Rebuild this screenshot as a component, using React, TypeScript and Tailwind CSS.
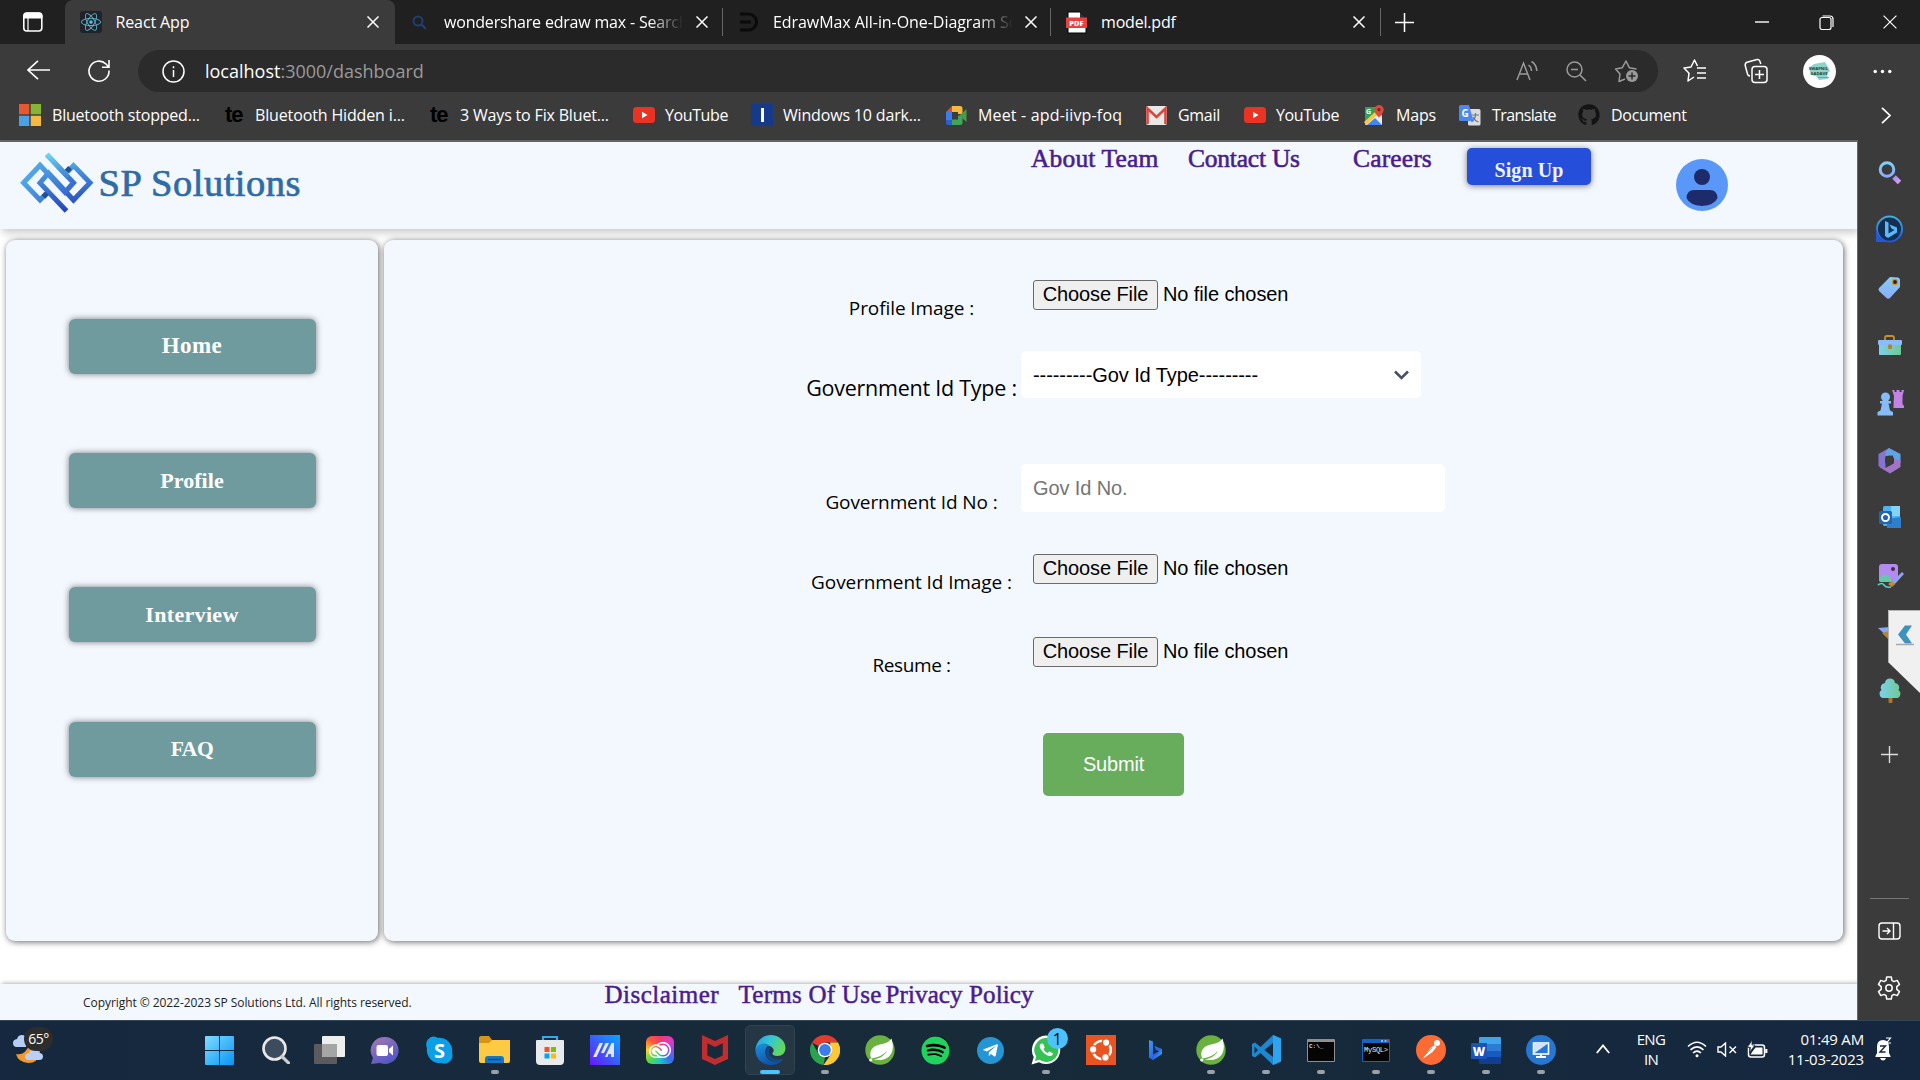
import type { ReactNode } from "react";
import { FaGithub, FaReact, FaSpotify, FaTelegramPlane } from "react-icons/fa";
import { SiMcafee, SiAdobecreativecloud, SiUbuntu } from "react-icons/si";

const X = ({ s = 12, w = 1.5 }: { s?: number; w?: number }) => (
  <svg width={s} height={s} viewBox="0 0 12 12" fill="none" stroke="#fff" strokeWidth={w}>
    <path d="M.5 .5l11 11M11.5 .5l-11 11" />
  </svg>
);

/* ---------- browser chrome ---------- */

function TabStrip() {
  return (
    <div className="flex h-11 shrink-0 bg-[#202020] text-base text-white">
      <div className="flex w-[65px] shrink-0 items-center pl-[22px]">
        <svg width="22" height="22" viewBox="0 0 22 22" fill="none" stroke="#fff">
          <rect x="1.8" y="2" width="18" height="18" rx="3" strokeWidth="1.6" />
          <path d="M2 4.500a2.500 2.500 0 0 1 2.500-2.500h13a2.500 2.500 0 0 1 2.500 2.500V7H2z" fill="#fff" />
          <path d="M6 7v13" strokeWidth="1.2" />
        </svg>
      </div>
      <div className="flex w-[330px] shrink-0 items-center rounded-t-lg bg-[#3b3b3b] pl-[15px] pr-[16px]">
        <div className="flex size-[22px] items-center justify-center rounded-[3px] bg-[#20232a]">
          <FaReact size={20} color="#61b8d4" />
        </div>
        <span className="ml-[13.5px] flex-1 tracking-[-0.12px]">React App</span>
        <X />
      </div>
      <div className="flex w-[327px] shrink-0 items-center pl-[17px] pr-[14px]">
        <svg width="15" height="15" viewBox="0 0 15 15" fill="none" stroke="#223f70" strokeWidth="2">
          <circle cx="6" cy="6" r="4.500" />
          <path d="M9.300 9.300l4.500 4.500" />
        </svg>
        <span className="ml-[17px] whitespace-nowrap tracking-[-0.19px] [mask-image:linear-gradient(90deg,#000_205px,transparent_239px)]">
          wondershare edraw max - Search
        </span>
        <span className="ml-auto"><X /></span>
      </div>
      <div className="my-2 w-px shrink-0 bg-[#666]" />
      <div className="flex w-[327px] shrink-0 items-center pl-[16px] pr-[13px]">
        <svg width="19" height="20" viewBox="0 0 19 20" fill="none" stroke="#0b0b0b" strokeWidth="3.200">
          <path d="M1 2h8.500a8 8 0 0 1 0 16H1M1 10h11" />
        </svg>
        <span className="ml-[15px] whitespace-nowrap tracking-[-0.06px] [mask-image:linear-gradient(90deg,#000_205px,transparent_240px)]">
          EdrawMax All-in-One-Diagram So
        </span>
        <span className="ml-auto"><X /></span>
      </div>
      <div className="my-2 w-px shrink-0 bg-[#666]" />
      <div className="flex w-[329px] shrink-0 items-center pl-[15px] pr-[15px]">
        <svg width="22" height="23" viewBox="0 0 22 23">
          <path d="M2 1h12l6 6v15H2z" fill="#fff" stroke="#000" />
          <path d="M14 1l6 6h-6z" fill="#333" />
          <rect x="0" y="6.500" width="21" height="10.500" fill="#e5433f" />
          <text x="10.500" y="14.600" textAnchor="middle" fontSize="7.500" fontWeight="800" fill="#fff" fontFamily="Open Sans">PDF</text>
        </svg>
        <span className="ml-[13px] flex-1 tracking-[-0.18px]">model.pdf</span>
        <X />
      </div>
      <div className="my-2 w-px shrink-0 bg-[#666]" />
      <div className="flex flex-1 items-center justify-between pl-[14px] pr-[23px]">
        <svg width="19" height="19" viewBox="0 0 19 19" stroke="#fff" strokeWidth="1.500"><path d="M0 9.500h19M9.500 0v19" /></svg>
        <div className="flex items-center gap-[49.5px]">
          <svg width="14" height="2" viewBox="0 0 14 2"><path d="M0 1h14" stroke="#fff" strokeWidth="1.400" /></svg>
          <svg width="15" height="15" viewBox="0 0 15 15" fill="none" stroke="#fff" strokeWidth="1.200">
            <rect x="1" y="2.500" width="11" height="12" rx="2" />
            <path d="M3.500 1h7.500a3 3 0 0 1 3 3v8" />
          </svg>
          <X s={14} w={1} />
        </div>
      </div>
    </div>
  );
}

function Toolbar() {
  return (
    <div className="flex h-[54px] shrink-0 items-center bg-[#3b3b3b] pl-[27px]">
      <svg className="-mt-[3px]" width="23" height="20" viewBox="0 0 23 20" fill="none" stroke="#fff" strokeWidth="1.600"><path d="M23 10H1M11 .800L1 10l10 9.200" /></svg>
      <svg className="-mt-[2px] ml-[38px]" width="22" height="23" viewBox="0 0 22 23" fill="none" stroke="#fff" strokeWidth="1.600">
        <path d="M21 11.500A10 10 0 1 1 18 5l2.600 2.800M21 1v7.200h-7" />
      </svg>
      <div className="ml-[28px] flex h-[42px] w-[1520px] items-center rounded-full bg-[#2b2b2b] pl-6 pr-[19px] text-lg">
        <svg width="23" height="23" viewBox="0 0 23 23" fill="none" stroke="#fff" strokeWidth="1.500">
          <circle cx="11.500" cy="11.500" r="10.500" />
          <path d="M11.500 10v7M11.500 6.200v2" />
        </svg>
        <span className="ml-[20px] text-white">localhost</span>
        <span className="flex-1 text-[#9a9a9a]">:3000/dashboard</span>
        <svg width="23" height="22" viewBox="0 0 23 22" fill="none" stroke="#9a9a9a" strokeWidth="1.500">
          <path d="M1 20L7.500 3 14 20M3.500 14h8M12.500 5q3 2 3 6M15.500 1.500q5 3 5.300 9.500" />
        </svg>
        <svg className="ml-[27px]" width="21" height="21" viewBox="0 0 21 21" fill="none" stroke="#9a9a9a" strokeWidth="1.500">
          <circle cx="8.500" cy="8.500" r="7.500" />
          <path d="M14 14l6 6M5 8.500h7" />
        </svg>
        <svg className="ml-[28px]" width="24" height="24" viewBox="0 0 24 24" fill="none" stroke="#9a9a9a" strokeWidth="1.500">
          <path d="M10 20l-6 2.500 1-7.500-4.500-5 6.800-1.300L11 2l3.300 6.700 7.200 1.300" strokeLinejoin="round" />
          <circle cx="17" cy="17" r="6" fill="#9a9a9a" stroke="none" />
          <path d="M17 13.500v7M13.500 17h7" stroke="#2b2b2b" />
        </svg>
      </div>
      <svg className="ml-[25px]" width="24" height="24" viewBox="0 0 24 24" fill="none" stroke="#fff" strokeWidth="1.500">
        <path d="M11 18l-6 4 1-7.800L1 9l7-1 3.500-7 3 6M14 9h9M14 14h9M14 19h9" strokeLinejoin="round" />
      </svg>
      <svg className="ml-[37px]" width="24" height="26" viewBox="0 0 24 26" fill="none" stroke="#fff" strokeWidth="1.500">
        <rect x="8" y="8.500" width="15" height="16" rx="3" />
        <path d="M15.500 12v9M11 16.500h9M6 18q-2 0-2.500-2L1.200 7.500Q1 5 3 4.300L13 1.500q2-.4 2.800 1.500l1 3" />
      </svg>
      <svg className="ml-[35px]" width="33" height="33" viewBox="0 0 33 33">
        <circle cx="16.500" cy="16.500" r="16.500" fill="#fff" />
        <path d="M6 13l5-4 11-2 3 5 2 4-3 3 1 5-9 1-3-4-5-1z" fill="#8fd3ca" />
        <text x="15.500" y="15" textAnchor="middle" fontSize="4.200" fontWeight="700" fontFamily="Open Sans" fill="#143d3b">SWAPNIL</text>
        <text x="16" y="19.500" textAnchor="middle" fontSize="4.200" fontWeight="700" fontFamily="Open Sans" fill="#143d3b">GADAVE</text>
        <path d="M15 22.500h11" stroke="#679b98" strokeWidth=".8" />
      </svg>
      <svg className="ml-[37px]" width="19" height="5" viewBox="0 0 19 5" fill="#fff"><circle cx="2.200" cy="2.500" r="1.700" /><circle cx="9.500" cy="2.500" r="1.700" /><circle cx="16.800" cy="2.500" r="1.700" /></svg>
    </div>
  );
}

const YouTube = () => (
  <svg width="22" height="16" viewBox="0 0 22 16"><rect width="22" height="16" rx="3.500" fill="#ea3323" /><path d="M9 4.800l5.500 3.200L9 11.200z" fill="#fff" /></svg>
);
const Te = () => <span className="w-[17px] text-[22px] font-bold leading-5 tracking-[-1px] text-black [font-family:'Liberation_Sans_Narrow','Liberation_Sans',sans-serif]">te</span>;

function Bookmarks() {
  const items: [string, string, string, ReactNode][] = [
    ["w-[206px] gap-[11px]", "tracking-[-0.2px]", "Bluetooth stopped...",
      <svg width="22" height="22" viewBox="0 0 22 22"><path fill="#e35a30" d="M0 0h10.300v10.300H0z" /><path fill="#87b337" d="M11.700 0H22v10.300H11.700z" /><path fill="#4ba0e8" d="M0 11.700h10.300V22H0z" /><path fill="#f4b93f" d="M11.700 11.700H22V22H11.700z" /></svg>],
    ["w-[205px] gap-[13px]", "tracking-[-0.14px]", "Bluetooth Hidden i...", <Te />],
    ["w-[203px] gap-[13px]", "tracking-[-0.17px]", "3 Ways to Fix Bluet...", <Te />],
    ["w-[118px] gap-[10px]", "tracking-[-0.4px]", "YouTube", <YouTube />],
    ["w-[195px] gap-[10px]", "tracking-[-0.17px]", "Windows 10 dark...",
      <span className="flex size-[22px] items-center justify-center bg-[#153a8c]"><span className="h-[14px] w-[3px] bg-white" /></span>],
    ["w-[200px] gap-[11px]", "tracking-[0.17px]", "Meet - apd-iivp-foq",
      <svg width="21" height="21" viewBox="0 0 21 21"><path d="M0 7l6-6v6z" fill="#e8453c" /><path d="M6 1h8a2.500 2.500 0 0 1 2.500 2.500V9H12V7H6z" fill="#f4b93f" /><path d="M0 7h6v8H0z" fill="#3b7ded" /><path d="M0 15h6v5H2a2 2 0 0 1-2-2z" fill="#2a5fcf" /><path d="M6 14.500h6V11l4.500-2v8.500A2.500 2.500 0 0 1 14 20H6z" fill="#3fa757" /><path d="M13.500 10.500L20.500 4v13z" fill="#43a047" /></svg>],
    ["w-[98px] gap-[11px]", "tracking-[-0.3px]", "Gmail",
      <svg width="21" height="19" viewBox="0 0 21 19"><rect width="21" height="19" rx="2" fill="#e8e8e8" /><path d="M1.500 18V2.500l9 8.500 9-8.500V18" fill="none" stroke="#d5483d" strokeWidth="2.600" /></svg>],
    ["w-[120px] gap-[10px]", "tracking-[-0.4px]", "YouTube", <YouTube />],
    ["w-[95px] gap-[12px]", "tracking-[-0.2px]", "Maps",
      <svg width="20" height="21" viewBox="0 0 20 21"><path d="M1 2h17v18H1z" fill="#34a156" /><path d="M1 20L14 7l4 4v9z" fill="#e8e8e8" /><path d="M3 20l8-7 7 7z" fill="#4285f4" /><path d="M0 17l11-10 2 3L2 20z" fill="#f6c944" /><path d="M15 0a4.700 4.700 0 0 0-4.700 4.700C10.300 8 15 12.500 15 12.500S19.700 8 19.700 4.700A4.700 4.700 0 0 0 15 0z" fill="#dc4a3d" /><circle cx="15" cy="4.700" r="1.600" fill="#811f1a" /><text x="2" y="9" fontSize="7" fill="#fff" fontFamily="Open Sans" fontWeight="700">G</text></svg>],
    ["w-[119px] gap-[11px]", "tracking-[-0.6px]", "Translate",
      <svg width="22" height="21" viewBox="0 0 22 21"><rect x="9" y="4" width="12.500" height="16.500" rx="1.500" fill="#dcdcdc" /><path d="M13 10h7M16.500 8v2q0 4-4 7M14 12q2 4 5.500 5" stroke="#6a7a88" strokeWidth="1.200" fill="none" /><path d="M1.500 0H10l4.500 16H1.500A1.500 1.500 0 0 1 0 14.500v-13A1.500 1.500 0 0 1 1.500 0z" fill="#4f86ec" /><text x="2.500" y="12" fontSize="10" fontWeight="700" fill="#fff" fontFamily="Open Sans">G</text></svg>],
    ["w-[120px] gap-[11px]", "tracking-[-0.28px]", "Document", <FaGithub size={22} color="#141414" />],
  ];
  return (
    <div className="flex h-[42px] shrink-0 items-center bg-[#3b3b3b] pb-[8px] pl-[19px] text-base text-white">
      {items.map(([w, t, label, icon], i) => (
        <div key={i} className={`flex shrink-0 items-center whitespace-nowrap ${w}`}>
          {icon}
          <span className={t}>{label}</span>
        </div>
      ))}
      <svg className="ml-auto mr-[29px]" width="10" height="17" viewBox="0 0 10 17" fill="none" stroke="#fff" strokeWidth="1.700"><path d="M1 .800l8 7.700-8 7.700" /></svg>
    </div>
  );
}

/* ---------- web page ---------- */

const serif = "[font-family:'Liberation_Serif',serif]";

function Header() {
  return (
    <header className={`relative flex h-[87px] shrink-0 bg-[#f3f8ff] shadow-[2px_4px_8px_rgba(0,0,0,0.2)] ${serif}`}>
      <svg className="mt-[10px] ml-[17.5px] shrink-0" width="78" height="64" viewBox="18 152 78 64" fill="none" strokeWidth="5">
        <defs>
          <linearGradient id="lgA" x1="20" y1="155" x2="80" y2="205" gradientUnits="userSpaceOnUse"><stop stopColor="#5cc4ee" /><stop offset="1" stopColor="#2d52c8" /></linearGradient>
          <linearGradient id="lgB" x1="50" y1="150" x2="60" y2="213" gradientUnits="userSpaceOnUse"><stop stopColor="#6fe6fb" /><stop offset=".35" stopColor="#4795dd" /><stop offset="1" stopColor="#2442bb" /></linearGradient>
        </defs>
        <path d="M66.500 211L40 183l8.500-10 25 27 16.500-17.300-16.500-17.200-6 6.200" stroke="url(#lgB)" />
        <path d="M46.800 154.500L73.500 182.700l-8.500 9.500-25-27-16.500 17.500L40 200l6-6.200" stroke="url(#lgA)" />
        <path d="M46.800 154.500L68 177" stroke="url(#lgB)" />
        <path d="M66.500 171.500l3.500-3.700M43.500 197l3.500-3.700" stroke="#23508f" />
      </svg>
      <span className="ml-[3px] mt-[20px] w-[932.5px] text-[38.500px] leading-[42px] tracking-[0.5px] text-[#2f6ba5] [-webkit-text-stroke:0.7px_#2f6ba5]">SP Solutions</span>
      <nav className="flex whitespace-nowrap pt-[3.5px] text-[25.500px] leading-[25px] text-[#4b1d8c] [-webkit-text-stroke:0.6px_#4b1d8c]">
        <a className="w-[157px] tracking-[0.16px]">About Team</a>
        <a className="w-[165px] tracking-[-0.22px]">Contact Us</a>
        <a className="w-[114px] tracking-[0.15px]">Careers</a>
      </nav>
      <button className="mt-[6px] h-[37px] w-[124px] rounded-[5px] bg-[#254edb] pt-[7px] text-[20px] font-bold leading-[30px] tracking-[0.1px] text-[#eef3ff] shadow-[0_1px_6px_rgba(0,0,0,0.5)]">Sign Up</button>
      <svg className="ml-[85px] mt-[17px]" width="52" height="52" viewBox="0 0 52 52">
        <circle cx="26" cy="26" r="26" fill="#5997f8" />
        <circle cx="26" cy="18" r="8" fill="#1e2b6b" />
        <path d="M18 31h16q7 0 7.500 8-3 7-15.500 8-12.500-1-15.500-8 .5-8 7.500-8z" fill="#1e2b6b" />
      </svg>
    </header>
  );
}

function FileField() {
  return (
    <div className="ml-3 flex text-[20px] leading-[26px] text-black [font-family:'Liberation_Sans',sans-serif]">
      <button className="h-[30px] w-[125px] rounded-[3px] border border-[#6b6b6b] bg-[#efefef] pb-0.5 tracking-[-0.1px]">Choose File</button>
      <span className="ml-[5px] pt-px tracking-[-0.1px]">No file chosen</span>
    </div>
  );
}

function Row({ h, label, ls, children }: { h: string; label: string; ls: string; children: ReactNode }) {
  return (
    <div className={`flex items-start ${h}`}>
      <label className={`mr-px w-[217px] whitespace-nowrap text-center text-black ${ls}`}>{label}</label>
      {children}
    </div>
  );
}

function Page() {
  return (
    <div className="flex w-[1857px] shrink-0 flex-col bg-white">
      <Header />
      <main className="flex h-[712px] shrink-0 gap-1.5 pl-1.5 pt-[11px]">
        <aside className="flex w-[372px] flex-col items-center gap-[79px] rounded-[9px] bg-[#f3f8ff] pt-[79px] shadow-[1px_1px_6px_rgba(0,0,0,0.6)]">
          {[["Home", "text-[23px] tracking-[0.45px]"], ["Profile", "text-[22px] tracking-[0.06px]"], ["Interview", "text-[22px] tracking-[0.32px]"], ["FAQ", "mt-px text-[21.500px] tracking-[-0.4px]"]].map(([t, ls]) => (
            <button key={t} className={`h-[55px] w-[247px] shrink-0 rounded-[6px] bg-[#709b9e] pb-px font-bold text-white shadow-[0_0_6px_rgba(0,0,0,0.5)] ${serif} ${ls}`}>{t}</button>
          ))}
        </aside>
        <section className="w-[1459px] rounded-[9px] bg-[#f3f8ff] pl-[419px] pt-10 shadow-[1px_1px_6px_rgba(0,0,0,0.6)]">
          <Row h="h-[71px]" label="Profile Image :" ls="pt-4 text-[19px] leading-6 tracking-[-0.08px]"><FileField /></Row>
          <Row h="h-[113px]" label="Government Id Type :" ls="pt-[22.5px] text-[21.5px] leading-7 tracking-[-0.25px]">
            <div className="flex h-[47px] w-[400px] items-center justify-between rounded-[5px] bg-white pl-[12px] pr-3 text-[20px] tracking-[-0.08px] text-black [font-family:'Liberation_Sans',sans-serif]">
              ---------Gov Id Type---------
              <svg width="15" height="10" viewBox="0 0 15 10" fill="none" stroke="#485260" strokeWidth="2.600"><path d="M1 1.500l6.500 6.500L14 1.500" /></svg>
            </div>
          </Row>
          <Row h="h-[90px]" label="Government Id No :" ls="pt-[26px] text-[19px] leading-6 tracking-[-0.1px]">
            <input placeholder="Gov Id No." className="h-12 w-[424px] rounded-[5px] bg-white pl-[12px] text-[20px] tracking-[-0.12px] placeholder:text-[#757575] [font-family:'Liberation_Sans',sans-serif]" />
          </Row>
          <Row h="h-[83px]" label="Government Id Image :" ls="pt-4 text-[19px] leading-6 tracking-[-0.09px]"><FileField /></Row>
          <Row h="h-24" label="Resume :" ls="pt-4 text-[19px] leading-6 tracking-[-0.4px]"><FileField /></Row>
          <button className="ml-[240px] h-[63px] w-[141px] rounded-[5px] bg-[#68ad5c] pb-[2px] text-[20px] tracking-[-0.2px] text-white [font-family:'Liberation_Sans',sans-serif]">Submit</button>
        </section>
      </main>
      <footer className={`mt-[43px] flex h-9 shrink-0 bg-[#f3f8ff] shadow-[2px_-1px_4px_rgba(0,0,0,0.3)]`}>
        <span className="ml-[83px] w-[521.5px] pt-[11px] text-xs leading-4 tracking-[-0.06px] text-[#222]">Copyright © 2022-2023 SP Solutions Ltd. All rights reserved.</span>
        <div className={`flex whitespace-nowrap text-[25px] leading-[22px] text-[#4b1d8c] [-webkit-text-stroke:0.5px_#4b1d8c] ${serif}`}>
          <a className="w-[134px] tracking-[0.5px]">Disclaimer</a>
          <a className="w-[147px] tracking-[0.26px]">Terms Of Use</a>
          <a className="tracking-[0.12px]">Privacy Policy</a>
        </div>
      </footer>
    </div>
  );
}

/* ---------- browser side bar ---------- */

function SideBar() {
  const icons: ReactNode[] = [
    <path d="M19 19l5.500 5.500" stroke="url(#pk)" strokeWidth="5" />,
    <g><circle cx="14.500" cy="14" r="12.500" fill="#123050" stroke="url(#bl2)" strokeWidth="2" /><path d="M1 27V14l4 10 8 3z" fill="#2456d8" /><path d="M10 6l3.500 1.500v11l6-3.500-3-1.500-2-4 7.500 3v5L13 23l-3-2z" fill="#5cb8fb" /></g>,
    <g><path d="M4 15L15 4l8 .500q2 .500 2 2.500v7L15 25q-2 1.500-3.500 0L4 18q-1-1.500 0-3z" fill="url(#bl)" /><circle cx="20" cy="9" r="2.600" fill="#26262b" stroke="#d99425" strokeWidth="1.200" /></g>,
    <g><path d="M10 9V7q0-2 2-2h5q2 0 2 2v2" fill="none" stroke="#c4912e" strokeWidth="1.800" /><rect x="4" y="12" width="22" height="12" rx="1" fill="url(#gr)" /><rect x="3" y="9" width="24" height="5" rx="1" fill="#8abbfa" /><rect x="13" y="13.500" width="4" height="4.500" rx="1" fill="#b78128" /></g>,
    <g><circle cx="10.500" cy="9" r="4.500" fill="#86bdf8" /><path d="M5 13h11v2.500h-2.500l1.500 7 3 1.500v3.500H2.500V24l3-1.500 1.500-7H5z" fill="#86bdf8" /><path d="M17 2h2.500v2h2V2h3v2h2V2H29l-1.500 6v8l1.500 2v2H18.500v-4L19 8z" fill="#c283e4" /></g>,
    <g><path d="M3.500 8L14 2l4 3.500L10.500 10v14l-7-4z" fill="#8574d0" /><path d="M14 2l11.500 6v9l-7-3.500-.500-4-7.500 .500V6z" fill="#5fa5e6" /><path d="M25.500 14v7L15 27.500 3.500 20.500l7 1.500 8-4.500V13z" fill="#a274c8" /><path d="M14.500 9.500l4.500 2.500v5l-4.500 2.500L10 17v-5z" fill="#3b3b3b" /></g>,
    <g><rect x="8" y="3" width="17" height="20" rx="1.500" fill="#4fb3ee" /><path d="M16 3h9v10h-9z" fill="#83d2fa" /><path d="M12 16l14-2v11H12z" fill="#2b7fcb" /><rect x="4" y="8" width="13" height="13" rx="1.500" fill="#1f66b8" /><circle cx="10.500" cy="14.500" r="3.500" fill="none" stroke="#fff" strokeWidth="1.900" /></g>,
    <g><rect x="4" y="3" width="19" height="18" rx="3" fill="#b58af0" /><path d="M4 17l6-4 5 3 3 5H6q-2 0-2-2z" fill="#63c9a8" /><circle cx="18" cy="8" r="2" fill="#3a3350" /><path d="M16 22L27 11l2 2-10 11z" fill="#8aa2f7" /><path d="M13 23l4-3 3 3-3 3z" fill="#c48b32" /><path d="M3 24q4-3 6 0t7 2" fill="none" stroke="#5ed0c4" strokeWidth="1.600" /></g>,
    <g><path d="M3 9l24-2-9 18-4-6z" fill="#86a8f8" /><path d="M7 14l7-2v9z" fill="#b9842e" /></g>,
    <g><rect x="13.500" y="19" width="4" height="8" rx="1" fill="#ad7428" /><path d="M15 2.500a5 5 0 0 1 5 4.500 4.500 4.500 0 0 1 3.500 7 4.500 4.500 0 0 1-1 8H7.500A4.500 4.500 0 0 1 6.500 14 4.500 4.500 0 0 1 10 7a5 5 0 0 1 5-4.500z" fill="url(#gr)" /></g>,
  ];
  return (
    <aside className="relative flex flex-1 flex-col items-center border-l border-[#666] bg-[#3b3b3b] pt-[3.5px]">
      {icons.map((c, i) => (
        <div key={i} className="flex h-[57.6px] items-center">
          <svg width="29" height="29" viewBox="0 0 29 29">
            <defs>
              <linearGradient id="bl" x1="0" y1="0" x2="0" y2="1"><stop stopColor="#7fd0f6" /><stop offset="1" stopColor="#8eabfa" /></linearGradient>
              <linearGradient id="bl2" x1="0" y1="0" x2="0" y2="1"><stop stopColor="#3eaee0" /><stop offset="1" stopColor="#2456d8" /></linearGradient>
              <linearGradient id="pk" x1="19" y1="19" x2="24" y2="25" gradientUnits="userSpaceOnUse"><stop stopColor="#a98ff5" /><stop offset="1" stopColor="#d99cf0" /></linearGradient>
              <linearGradient id="gr" x1="0" y1="0" x2="1" y2="0"><stop stopColor="#7ad2ee" /><stop offset="1" stopColor="#6fc98f" /></linearGradient>
            </defs>
            {i === 0 && <circle cx="12" cy="11.500" r="6.800" fill="none" stroke="url(#bl)" strokeWidth="3" />}
            {c}
          </svg>
        </div>
      ))}
      <svg className="mt-[26.5px]" width="17" height="17" viewBox="0 0 17 17" stroke="#ddd" strokeWidth="1.400"><path d="M0 8.500h17M8.500 0v17" /></svg>
      <div className="mt-[135px] h-px w-[39px] bg-[#777]" />
      <svg className="mt-[23px]" width="23" height="18" viewBox="0 0 23 18" fill="none" stroke="#fff" strokeWidth="1.400"><rect x="1" y="1" width="21" height="16" rx="3" /><path d="M15.500 1v16M4.500 9h7M9 6l3 3-3 3" /></svg>
      <svg className="mt-[36.5px]" width="24" height="24" viewBox="0 0 24 24" fill="none" stroke="#fff" strokeWidth="1.500">
        <circle cx="12" cy="12" r="3.200" />
        <path d="M9.700 1h4.600l.6 3.400 2 1.200 3.300-1.200 2.300 4-2.700 2.200v2.800l2.700 2.200-2.300 4-3.300-1.200-2 1.200-.6 3.400H9.700l-.6-3.400-2-1.200-3.300 1.200-2.300-4 2.700-2.200v-2.800L1.500 8.400l2.300-4 3.300 1.200 2-1.200z" strokeLinejoin="round" />
      </svg>
      <svg className="absolute right-0 top-[470px]" width="32" height="84" viewBox="0 0 32 84">
        <path d="M0 0h32v83L0 52z" fill="#f0f0f0" />
        <path d="M.500 52V.500H32" fill="none" stroke="#b5b5b5" />
        <path d="M17 15.500h7l-6 9 6 9h-7l-7-9z" fill="#3d93bd" />
        <path d="M8 34.500h18" stroke="#aaa" strokeWidth="1.500" />
      </svg>
    </aside>
  );
}

/* ---------- task bar ---------- */

const Spring = () => (
  <svg width="30" height="30" viewBox="0 0 30 30"><circle cx="15" cy="15" r="14.700" fill="#6bb13f" /><path d="M26.500 3.500c2.500 8 1.500 14-2.500 18-4.500 4.500-11 3.500-15.500 3.300C13 24 19 21.500 22 16c-4 4-9 6.500-15.500 7.500C4 19 5.500 13.500 10.500 11 16 8.500 23 9 26.500 3.500z" fill="#fff" /><circle cx="5.800" cy="25" r="1.600" fill="#fff" /></svg>
);

const apps: [ReactNode, boolean][] = [
  [<svg width="29" height="29" viewBox="0 0 29 29"><defs><linearGradient id="w" x1="0" y1="0" x2="29" y2="29" gradientUnits="userSpaceOnUse"><stop stopColor="#7fdcff" /><stop offset="1" stopColor="#0795f7" /></linearGradient></defs><path d="M0 1q0-1 1-1h13v14H0zM15 0h13q1 0 1 1v13H15zM0 15h14v14H1q-1 0-1-1zM15 15h14v13q0 1-1 1H15z" fill="url(#w)" /></svg>, false],
  [<svg width="28" height="28" viewBox="0 0 28 28" fill="none"><circle cx="12.500" cy="12.500" r="11" fill="#3c4b5d" stroke="#e9e9e9" strokeWidth="2.600" /><path d="M20 20.500l6.500 6.500" stroke="#ccc" strokeWidth="3.200" strokeLinecap="round" /></svg>, false],
  [<svg width="31" height="28" viewBox="0 0 31 28"><rect y="8" width="23" height="20" rx="1" fill="#5b5b5d" /><rect x="8" width="23" height="21" rx="1" fill="#eee" /><path d="M8 8h15v13H8z" fill="#a5a5a5" /></svg>, false],
  [<svg width="29" height="29" viewBox="0 0 29 29"><defs><linearGradient id="ch" x1="0" y1="0" x2=".6" y2="1"><stop stopColor="#a97bb0" /><stop offset="1" stopColor="#5256c8" /></linearGradient></defs><path d="M15 1a13.500 13.500 0 1 1-5 26L1 28l2-6A13.500 13.500 0 0 1 15 1z" fill="url(#ch)" /><rect x="6.500" y="9" width="11.500" height="11" rx="2" fill="#fff" /><path d="M19 13l4-3.500v10L19 16z" fill="#fff" /></svg>, false],
  [<svg width="29" height="29" viewBox="0 0 29 29"><path d="M8 .500a8 8 0 0 1 4.500 1.300A13 13 0 0 1 27 17 8 8 0 0 1 16.500 27 13 13 0 0 1 2 12 8 8 0 0 1 8 .500z" fill="#0a9fe6" /><text x="14.500" y="21.500" textAnchor="middle" fontSize="20" fontWeight="700" fill="#fff" fontFamily="Open Sans">S</text></svg>, false],
  [<svg width="31" height="28" viewBox="0 0 31 28"><path d="M0 2q0-2 2-2h8l3 4v8H0z" fill="#d69516" /><path d="M0 7h10l3-3h18v21q0 2-2 2H2q-2 0-2-2z" fill="#fdca42" /><path d="M6 27v-4q0-3 3-3h13q3 0 3 3v4z" fill="#1576c8" /><path d="M9 23.500h13" stroke="#0c4a83" strokeWidth="1.400" /></svg>, true],
  [<svg width="30" height="29" viewBox="0 0 30 29"><path d="M8 6V1h14v5" fill="none" stroke="#35a9e6" strokeWidth="2.200" /><path d="M1 5q0-1 1-1h26q1 0 1 1v20q0 4-4 4H5q-4 0-4-4z" fill="#e9eaec" /><path d="M9.500 11h5v5h-5z" fill="#f35325" /><path d="M16 11h5v5h-5z" fill="#81bc06" /><path d="M9.500 17.500h5v5h-5z" fill="#05a6f0" /><path d="M16 17.500h5v5h-5z" fill="#ffba08" /></svg>, false],
  [<svg width="30" height="30" viewBox="0 0 30 30"><defs><linearGradient id="my" x1="0" y1="1" x2="1" y2="0"><stop stopColor="#6b15ff" /><stop offset="1" stopColor="#06a9ff" /></linearGradient></defs><path d="M0 0h30v30H0z" fill="url(#my)" /><path d="M3 22L9.500 8H13L6.500 22zM11 18l4.500-10H19l-5 10zM15 22l6.500-14H24v14h-3v-3h-2.500l-1 3z" fill="#e3e6ff" /></svg>, false],
  [<span className="flex size-7 items-center justify-center rounded-md bg-[conic-gradient(from_0deg,#f03a6a,#e03ac0,#8f4cf0,#3470f0,#19c9c9,#50d94a,#f3d72c,#ff5a36,#f03a6a)]"><SiAdobecreativecloud size={22} color="#fff" /></span>, false],
  [<SiMcafee size={30} color="#c12c2f" />, false],
  [<svg width="31" height="30" viewBox="0 0 31 30"><defs><linearGradient id="e1" x1="0" y1="0" x2="1" y2=".4"><stop stopColor="#1f9ddd" /><stop offset=".5" stopColor="#35c5d8" /><stop offset="1" stopColor="#5fd95b" /></linearGradient><linearGradient id="e2" x1="0" y1="0" x2=".5" y2="1"><stop stopColor="#1b93de" /><stop offset="1" stopColor="#1150a5" /></linearGradient></defs><path d="M.500 15C1 6 8 0 15.500 0 24 0 30.500 6 30.500 13c0 5-3.500 8-8 8-4 0-5.500-1.500-5-3 1.500-1.500 1.500-3 .500-4.500C15 9 5 9 .500 15z" fill="url(#e1)" /><path d="M.500 15C2 8 10 7 14.500 10c-6 2-6 13 2 16 5 1.500 9 0 12-2.500C26 28 21 30 15.500 30 7 30 .500 23.500 .500 15z" fill="url(#e2)" /><path d="M14 11c-6 5-2 14 5 15.500 4 .5 7-.5 9.500-3-5 2-14 .5-14.500-6-.100-2 0-3 1.500-4z" fill="#0c4c92" /></svg>, false],
  [<svg width="30" height="30" viewBox="0 0 30 30"><path d="M15 0a15 15 0 0 1 13 7.500H15L8.500 11 2 7.500A15 15 0 0 1 15 0z" fill="#e33b2e" /><path d="M2 7.500l6.500 11.300L15 22.500 13.500 30A15 15 0 0 1 2 7.500z" fill="#2ba24c" /><path d="M28 7.500A15 15 0 0 1 13.500 30l8-11.500L20 7.500z" fill="#fcc934" /><circle cx="15" cy="15" r="7.300" fill="#fff" /><circle cx="15" cy="15" r="5.900" fill="#3b7ded" /></svg>, true],
  [<Spring />, false],
  [<span className="flex size-7 items-center justify-center rounded-full bg-black"><FaSpotify className="shrink-0" size={29} color="#1fd35e" /></span>, false],
  [<span className="flex size-[27px] items-center justify-center rounded-full bg-[#2496d6]"><FaTelegramPlane size={17} color="#fff" /></span>, false],
  [<span className="relative flex size-[30px] items-center justify-center"><svg width="30" height="30" viewBox="0 0 30 30"><path d="M15 .500a14.300 14.300 0 1 1-7 26.800L.500 29.500 2.700 22A14.500 14.500 0 0 1 15 .500z" fill="#fff" /><path d="M15 3a12 12 0 1 1-6.500 21.800l-4.500 1.200 1.200-4.500A12 12 0 0 1 15 3z" fill="#35c254" /><path d="M10.500 8.500c-2.500 1-2.500 4 1 8s7.500 6 10 3.500l.5-1.500-3.500-2-2 1.500c-2-1-3-2-4-4l1.200-1.500-1.500-3.700z" fill="#fff" /></svg><span className="absolute -top-[7px] left-[16px] flex size-[21px] items-center justify-center rounded-full bg-[#4cc2ff] text-base text-black">1</span></span>, true],
  [<span className="flex size-[30px] items-center justify-center bg-[#e95420]"><SiUbuntu size={22} color="#fff" /></span>, false],
  [<svg width="15" height="21" viewBox="0 0 15 21"><defs><linearGradient id="bg" x1="0" y1="0" x2="1" y2="1"><stop stopColor="#3a9ff5" /><stop offset=".6" stopColor="#2763e8" /><stop offset="1" stopColor="#3fc4f5" /></linearGradient></defs><path d="M1 0l4 1.500v13l6-3.200L8 10 6.500 6 14 9v5L5 20l-4-2.500z" fill="url(#bg)" /></svg>, false],
  [<Spring />, true],
  [<svg width="30" height="30" viewBox="0 0 30 30"><path d="M22 0l8 3.500v23L22 30 9.500 18 4 22.500 1 21V9l3-1.500 5.500 4.500z M22 8l-8.500 7 8.500 7z M3.500 11.500v7L7 15z" fillRule="evenodd" fill="#1d87cf" /><path d="M22 0l8 3.500v23L22 30z" fill="#2ea4ee" /></svg>, true],
  [<svg width="28" height="23" viewBox="0 0 28 23"><rect width="28" height="23" rx="1" fill="#8d8f91" /><path d="M1 3h26v19H1z" fill="#050505" /><text x="2" y="9" fontSize="6" fill="#ddd" fontFamily="Liberation Mono" fontWeight="700">C:\_</text></svg>, true],
  [<svg width="28" height="23" viewBox="0 0 28 23"><rect width="28" height="23" rx="1" fill="#1464c4" /><path d="M1 4h26v18H1z" fill="#050505" /><path d="M19 2h2M22.500 2h2" stroke="#fff" /><path d="M25 2h2" stroke="#e33" strokeWidth="1.500" /><text x="2" y="12.500" fontSize="7" fill="#eee" fontFamily="Liberation Mono" textLength="24">MySQL&gt;</text></svg>, true],
  [<svg width="30" height="30" viewBox="0 0 30 30"><circle cx="15" cy="15" r="15" fill="#fd6b35" /><path d="M6.500 24l8-11 4-3 2 2-4 5z" fill="#fff" /><circle cx="21" cy="8" r="3" fill="#fff" /><path d="M9 20l7-7" stroke="#fd6b35" strokeWidth=".8" /></svg>, true],
  [<svg width="30" height="27" viewBox="0 0 30 27"><path d="M8 1q0-1 1-1h20q1 0 1 1v6H8z" fill="#41a5ee" /><path d="M8 7h22v7H8z" fill="#2b7cd3" /><path d="M8 14h22v6H8z" fill="#185abd" /><path d="M8 20h22v6q0 1-1 1H9q-1 0-1-1z" fill="#103f91" /><rect y="6" width="16" height="16" rx="1" fill="#1a52b5" /><text x="8" y="18.500" textAnchor="middle" fontSize="12" fontWeight="800" fill="#fff" fontFamily="Open Sans">W</text></svg>, true],
  [<svg width="30" height="30" viewBox="0 0 30 30"><circle cx="15" cy="15" r="15" fill="#2776d0" /><rect x="7.500" y="8" width="15" height="11" fill="none" stroke="#fff" strokeWidth="1.600" /><path d="M8 18.500L22 8.500H8z" fill="#cfe3fa" /><path d="M15 19v3M10 22h10" stroke="#fff" strokeWidth="1.800" /></svg>, true],
];

function TaskBar() {
  return (
    <div className="flex h-[60px] shrink-0 border-t border-[#344558] bg-linear-to-r from-[#16283f] via-[#182b39] to-[#14273f] text-white">
      <div className="flex w-[192px] shrink-0 pl-3">
        <div className="relative mt-[9px] h-9 w-10">
          <svg width="40" height="36" viewBox="0 0 40 36">
            <path d="M4 17q-3-.5-3-4t4-4q1-4 5-4t4 5v7z" fill="#b7cdf5" />
            <path d="M17 15q12-2 11 8-2 10-12 10Q6 32 4 24q9 2 13-9z" fill="#f09a2c" />
            <path d="M16 30q-3-.5-3-3.500t4-3.500q1-4 5-4t5 4q4 0 4 3.500T27 30z" fill="#b9cff6" />
          </svg>
          <span className="absolute -top-[3px] left-[12px] flex h-6 w-[29px] items-center justify-center rounded-full bg-[#2d2d2d] text-sm tracking-[-0.5px]">65°</span>
        </div>
      </div>
      <div className="flex">
        {apps.map(([icon, running], i) => (
          <div key={i} className="flex w-[55.08px] justify-center">
            <div className={`mt-1 flex h-[50px] w-[50px] flex-col items-center rounded-[5px] ${i === 10 ? "border border-[#32424f] bg-[#253644]" : "border border-transparent"}`}>
              <div className={`flex h-[48px] shrink-0 items-center ${i === 1 ? "translate-x-px" : ""}`}>{icon}</div>
              {i === 10 && <div className="-mt-[4px] h-1 w-5 shrink-0 rounded-full bg-[#4cc2ff]" />}
              {running && <div className="-mt-[4px] h-1 w-2 shrink-0 rounded-full bg-[#9aa1a8]" />}
            </div>
          </div>
        ))}
      </div>
      <div className="flex flex-1 items-center pb-[3px] pl-[27px] text-[15px] leading-5">
        <svg width="14" height="10" viewBox="0 0 14 10" fill="none" stroke="#fff" strokeWidth="1.800"><path d="M.800 9L7 1.500 13.200 9" /></svg>
        <div className="ml-[26px] w-[30px] text-center tracking-[-0.7px]">ENG<br />IN</div>
        <svg className="ml-[21.5px]" width="20" height="18" viewBox="0 0 20 18" fill="none" stroke="#fff" strokeWidth="1.600">
          <path d="M1 6.500q9-8.500 18 0M3.500 9.800q6.500-6 13 0M6 13q4-3.700 8 0" />
          <circle cx="10" cy="15.800" r="1.500" fill="#fff" stroke="none" />
        </svg>
        <svg className="ml-[10px]" width="20" height="15" viewBox="0 0 20 15" fill="none" stroke="#fff" strokeWidth="1.400"><path d="M1 5v5h3l4.500 4V1L4 5zM12.500 4.500l6.500 6.500M19 4.500L12.500 11" /></svg>
        <svg className="ml-[10px]" width="21" height="19" viewBox="0 0 21 19" fill="none" stroke="#fff" strokeWidth="1.500">
          <rect x="1.500" y="5" width="16" height="12" rx="2.500" /><path d="M19.300 9v4" strokeWidth="2.200" />
          <path d="M8.500 7.500h7v7h-12l2-3z" fill="#fff" stroke="none" /><path d="M5 0L.500 7.500h3l-1 5 5.500-7.500H5z" fill="#fff" stroke="#14273f" strokeWidth=".8" />
        </svg>
        <div className="ml-[17.5px] w-[78px] whitespace-nowrap text-right tracking-[-0.2px]">01:49 AM<br />11-03-2023</div>
        <svg className="ml-[11.5px]" width="17" height="24" viewBox="0 0 17 24">
          <path d="M2 10q0-7 6-7t6 7v6l1.500 3v1H.500v-1L2 16z" fill="#fff" />
          <path d="M5 21h6q-1 2.500-3 2.500T5 21z" fill="#fff" />
          <path d="M5 9h5.500L5 15h5.500" fill="none" stroke="#14273f" strokeWidth="1.400" />
          <path d="M11 1h4.500L11.500 6H16" fill="none" stroke="#fff" strokeWidth="1.200" />
        </svg>
      </div>
    </div>
  );
}

export default function App() {
  return (
    <div className="flex h-[1080px] w-[1920px] flex-col overflow-hidden bg-[#3b3b3b] [font-family:'Open_Sans',sans-serif]">
      <TabStrip />
      <Toolbar />
      <Bookmarks />
      <div className="flex h-[880px] shrink-0">
        <div className="flex w-[1857px] shrink-0 flex-col border-t-2 border-[#666]">
          <Page />
        </div>
        <SideBar />
      </div>
      <TaskBar />
    </div>
  );
}
